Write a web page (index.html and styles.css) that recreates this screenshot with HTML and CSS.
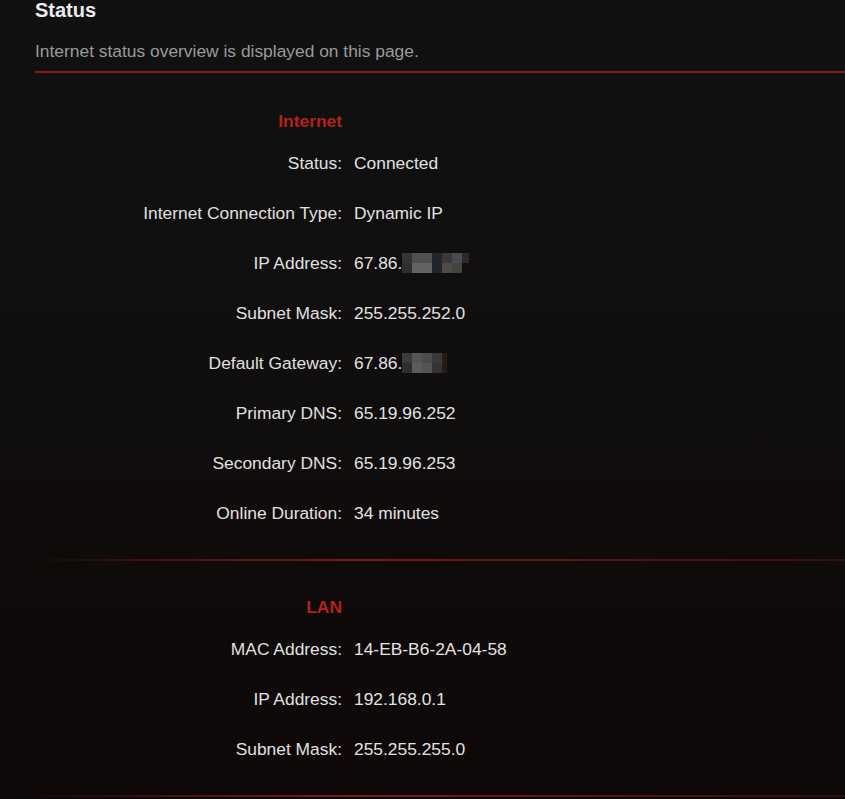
FILE: index.html
```html
<!DOCTYPE html>
<html lang="en">
<head>
<meta charset="utf-8">
<title>Status</title>
<link rel="stylesheet" href="styles.css">
</head>
<body>
<div class="page">
  <header class="head">
    <h1 class="title">Status</h1>
    <p class="subtitle">Internet status overview is displayed on this page.</p>
  </header>

  <section class="block first">
    <div class="grid">
      <div class="heading">Internet</div><div></div>
      <div class="label">Status:</div><div class="value">Connected</div>
      <div class="label">Internet Connection Type:</div><div class="value">Dynamic IP</div>
      <div class="label">IP Address:</div><div class="value">67.86.<svg class="mosaic" width="67" height="20" viewBox="0 0 67 20"><rect x="0" y="0" width="10" height="10" fill="#353535"/><rect x="10" y="0" width="20" height="10" fill="#4f4f4f"/><rect x="30" y="0" width="10" height="10" fill="#23252c"/><rect x="40" y="0" width="10" height="10" fill="#3b3838"/><rect x="50" y="0" width="10" height="10" fill="#4a4b50"/><rect x="60" y="0" width="7" height="10" fill="#2e2b25"/><rect x="0" y="10" width="10" height="10" fill="#2e2e2e"/><rect x="10" y="10" width="20" height="10" fill="#636262"/><rect x="30" y="10" width="10" height="10" fill="#22242b"/><rect x="40" y="10" width="10" height="10" fill="#4f4b4b"/><rect x="50" y="10" width="10" height="10" fill="#46433f"/></svg></div>
      <div class="label">Subnet Mask:</div><div class="value">255.255.252.0</div>
      <div class="label">Default Gateway:</div><div class="value">67.86.<svg class="mosaic" width="45" height="20" viewBox="0 0 45 20"><rect x="0" y="0" width="10" height="10" fill="#3a3a3e"/><rect x="10" y="0" width="10" height="10" fill="#545454"/><rect x="20" y="0" width="10" height="10" fill="#4e4a4a"/><rect x="30" y="0" width="10" height="10" fill="#3a3a3c"/><rect x="40" y="0" width="5" height="20" fill="#2a1813"/><rect x="0" y="10" width="10" height="10" fill="#2e2e31"/><rect x="10" y="10" width="10" height="10" fill="#5c5c5c"/><rect x="20" y="10" width="10" height="10" fill="#555353"/><rect x="30" y="10" width="10" height="10" fill="#333335"/></svg></div>
      <div class="label">Primary DNS:</div><div class="value">65.19.96.252</div>
      <div class="label">Secondary DNS:</div><div class="value">65.19.96.253</div>
      <div class="label">Online Duration:</div><div class="value">34 minutes</div>
    </div>
  </section>

  <div class="divider"></div>

  <section class="block">
    <div class="grid">
      <div class="heading">LAN</div><div></div>
      <div class="label">MAC Address:</div><div class="value">14-EB-B6-2A-04-58</div>
      <div class="label">IP Address:</div><div class="value">192.168.0.1</div>
      <div class="label">Subnet Mask:</div><div class="value">255.255.255.0</div>
    </div>
  </section>

  <div class="divider"></div>
</div>
</body>
</html>
```

FILE: styles.css
```css
html, body {
  margin: 0;
  padding: 0;
}
body {
  width: 845px;
  min-height: 799px;
  background: linear-gradient(to bottom, #111111 0px, #100d0d 420px, #0e0707 799px);
  font-family: "Liberation Sans", Arial, Helvetica, sans-serif;
  color: #e2e2e2;
  overflow: hidden;
}
.page {
  display: flex;
  flex-direction: column;
}
.head {
  margin-left: 35px;
  border-bottom: 2px solid #8c1a13;
  padding-bottom: 10px;
}
.title {
  margin: 0;
  font-size: 20px;
  line-height: 20px;
  font-weight: bold;
  color: #ececec;
}
.subtitle {
  margin: 21px 0 0;
  font-size: 17.4px;
  line-height: 20px;
  color: #9a9a9a;
}
.block {
  padding: 36px 0 36px 35px;
}
.block.first {
  padding-top: 38px;
}
.grid {
  display: grid;
  grid-template-columns: 307px 1fr;
  column-gap: 12px;
  row-gap: 30px;
  font-size: 17.4px;
  line-height: 20px;
}
.heading {
  text-align: right;
  font-weight: bold;
  color: #b1221a;
  margin-bottom: -8px;
}
.label {
  text-align: right;
  color: #e0e0e0;
}
.value {
  color: #e2e2e2;
  white-space: nowrap;
}
.mosaic {
  display: inline-block;
  vertical-align: -4px;
}
.divider {
  height: 2px;
  background: linear-gradient(to right, rgba(120, 26, 20, 0) 3%, rgba(120, 26, 20, 0.55) 20%, #7a1c16 42%, rgba(120, 26, 20, 0.7) 70%, rgba(120, 26, 20, 0.35) 100%);
}
```
